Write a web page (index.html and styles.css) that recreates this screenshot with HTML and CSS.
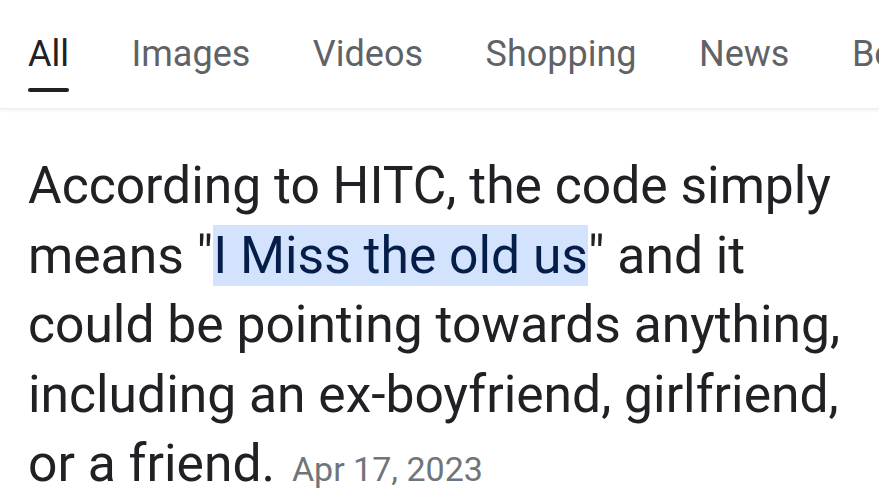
FILE: index.html
```html
<!DOCTYPE html>
<html lang="en">
<head>
    <meta charset="UTF-8">
    <meta name="viewport" content="width=device-width, initial-scale=1.0">
    <title>I Miss the old us - Search</title>
    <link rel="stylesheet" href="styles.css">
</head>
<body>
    <nav class="tabs">
        <a class="tab active" href="#">All</a>
        <a class="tab" href="#">Images</a>
        <a class="tab" href="#">Videos</a>
        <a class="tab" href="#">Shopping</a>
        <a class="tab" href="#">News</a>
        <a class="tab" href="#">Books</a>
    </nav>
    <div class="snippet">
        <p>According to HITC, the code simply means "<mark>I Miss the old us</mark>" and it could be pointing towards anything, including an ex-boyfriend, girlfriend, or a friend. <span class="date">Apr 17, 2023</span></p>
    </div>
</body>
</html>
```
FILE: styles.css
```css
body {
    margin: 0;
    background-color: #fff;
    color: #202124;
    font-family: Roboto, Arial, sans-serif;
    overflow: hidden;
}
.tabs {
    display: flex;
    gap: 62.5px;
    padding: 34px 0 16px 28px;
    border-bottom: 1px solid #ececec;
    box-shadow: 0 2px 3px rgba(0, 0, 0, 0.05);
    white-space: nowrap;
    overflow: hidden;
}
.tab {
    font-size: 36px;
    line-height: 40px;
    color: #5f6368;
    text-decoration: none;
}
.tab.active {
    color: #202124;
}
.tab::after {
    content: "";
    display: block;
    height: 4px;
    margin-top: 14px;
    border-radius: 2px;
}
.tab.active::after {
    background-color: #202124;
}
.snippet {
    padding: 42px 0 0 28px;
}
.snippet p {
    margin: 0;
    font-size: 51.6px;
    line-height: 69.5px;
}
.snippet mark {
    background-color: #d3e3fd;
    color: #041e49;
}
.date {
    margin-left: 4px;
    font-size: 34px;
    color: #70757a;
}
```
